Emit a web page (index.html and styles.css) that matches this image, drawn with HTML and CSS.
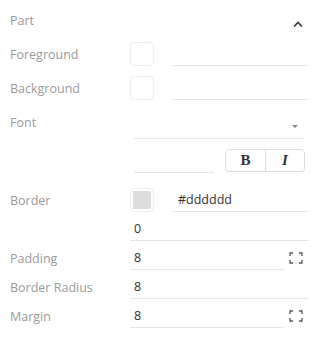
FILE: index.html
```html
<!DOCTYPE html>
<html lang="en">
<head>
    <meta charset="UTF-8">
    <title>Part settings</title>
    <link rel="stylesheet" href="styles.css">
</head>
<body>
    <div class="panel">
        <div class="section-head">
            <span class="section-title">Part</span>
            <svg class="caret" width="10" height="6" viewBox="0 0 10 6"><path d="M1 5.5 L5 1.5 L9 5.5" fill="none" stroke="#333" stroke-width="1.6"/></svg>
        </div>

        <div class="row">
            <span class="label">Foreground</span>
            <div class="swatch"></div>
            <div class="field wide"></div>
        </div>

        <div class="row">
            <span class="label">Background</span>
            <div class="swatch"></div>
            <div class="field wide"></div>
        </div>

        <div class="row font-row">
            <span class="label">Font</span>
            <div class="select">
                <span class="arrow"></span>
            </div>
        </div>

        <div class="row style-row">
            <span class="label"></span>
            <div class="field size"></div>
            <div class="btn-group">
                <button class="style-btn bold">B</button>
                <button class="style-btn italic">I</button>
            </div>
        </div>

        <div class="row">
            <span class="label">Border</span>
            <div class="swatch filled"><span></span></div>
            <div class="field wide">#dddddd</div>
        </div>

        <div class="num-rows">
            <div class="row num">
                <span class="label"></span>
                <div class="field">0</div>
            </div>
            <div class="row num">
                <span class="label">Padding</span>
                <div class="field short">8</div>
                <svg class="expand" width="14" height="12" viewBox="0 0 14 12"><path d="M1 4 V1 H4 M10 1 H13 V4 M13 8 V11 H10 M4 11 H1 V8" fill="none" stroke="#555" stroke-width="1.3"/></svg>
            </div>
            <div class="row num">
                <span class="label">Border Radius</span>
                <div class="field">8</div>
            </div>
            <div class="row num">
                <span class="label">Margin</span>
                <div class="field short">8</div>
                <svg class="expand" width="14" height="12" viewBox="0 0 14 12"><path d="M1 4 V1 H4 M10 1 H13 V4 M13 8 V11 H10 M4 11 H1 V8" fill="none" stroke="#555" stroke-width="1.3"/></svg>
            </div>
        </div>
    </div>
</body>
</html>
```

FILE: styles.css
```css
body {
    margin: 0;
    font-family: 'Open Sans', sans-serif;
    font-size: 12.5px;
    color: #333;
    background: white;
}

.panel {
    width: 331px;
    padding: 0 22px 0 10px;
    box-sizing: border-box;
}

.section-head {
    display: flex;
    justify-content: space-between;
    align-items: center;
    height: 37px;
    margin-top: 2px;
    margin-bottom: -2px;
}

.section-title {
    color: #9a9a9a;
    margin-top: -1px;
}

.caret {
    margin: 6px 6px 0 0;
}

.row {
    display: flex;
    align-items: center;
    height: 34px;
}

.label {
    width: 120px;
    flex-shrink: 0;
    color: #9a9a9a;
}

.swatch {
    width: 24px;
    height: 24px;
    box-sizing: border-box;
    border: 1px solid #eeeeee;
    border-radius: 4px;
    padding: 2px;
    flex-shrink: 0;
}

.swatch.filled span {
    display: block;
    width: 100%;
    height: 100%;
    background: #dddddd;
}

.field {
    flex: 1;
    height: 24px;
    line-height: 23px;
    box-sizing: border-box;
    padding-left: 4px;
    border-bottom: 1px solid #e2e5e9;
}

.field.wide {
    margin-left: 19px;
    padding-left: 5px;
}

.font-row {
    height: 36px;
    align-items: flex-start;
}

.font-row .label {
    margin-top: 9px;
}

.select {
    flex: 1;
    height: 34px;
    box-sizing: border-box;
    margin: 0 5px 0 4px;
    border-bottom: 1px solid #e2e5e9;
    position: relative;
}

.arrow {
    position: absolute;
    right: 6px;
    top: 20px;
    border-left: 3px solid transparent;
    border-right: 3px solid transparent;
    border-top: 3px solid #888;
}

.style-row {
    height: 42px;
    align-items: flex-start;
}

.field.size {
    flex: none;
    width: 80px;
    margin: 8px 0 0 4px;
}

.btn-group {
    display: flex;
    margin: 8px 0 0 11px;
    border: 1px solid #dddddd;
    border-radius: 4px;
    height: 23px;
    box-sizing: border-box;
}

.style-btn {
    width: 39px;
    border: none;
    background: white;
    font-family: 'Liberation Serif', serif;
    font-weight: bold;
    font-size: 15px;
    color: #333;
    padding: 0;
    border-radius: 4px;
}

.style-btn.italic {
    font-style: italic;
    border-left: 1px solid #dddddd;
    border-radius: 0 4px 4px 0;
}

.num-rows {
    display: flex;
    flex-direction: column;
    gap: 5px;
}

.row.num {
    height: 24px;
}

.field.short {
    flex: none;
    width: 154px;
}

.expand {
    margin-left: 5px;
}
```
